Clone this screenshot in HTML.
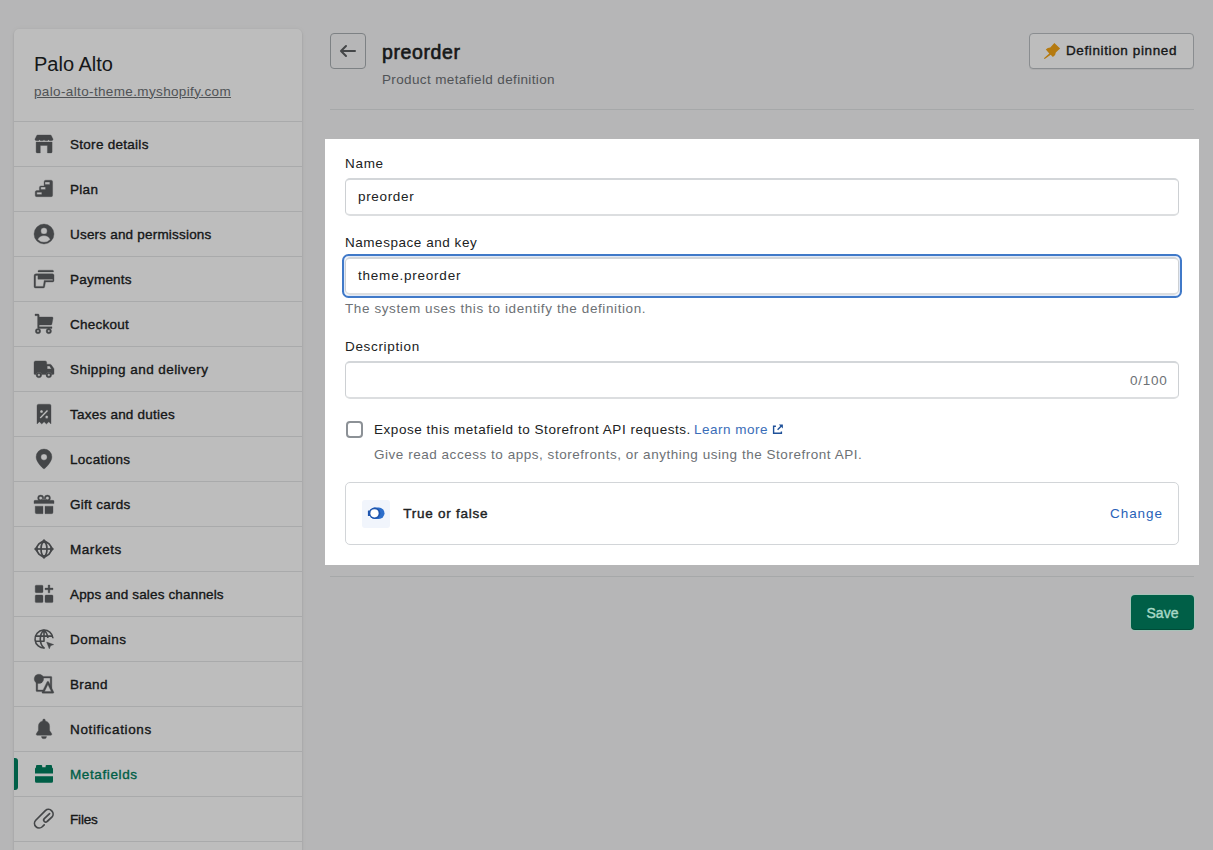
<!DOCTYPE html>
<html>
<head>
<meta charset="utf-8">
<title>preorder</title>
<style>
*{box-sizing:border-box;margin:0;padding:0}
html,body{width:1213px;height:850px;overflow:hidden}
body{background:#f6f6f7;font-family:"Liberation Sans",sans-serif;color:#202223;position:relative;font-size:14px}
.abs{position:absolute}
/* sidebar */
#side{position:absolute;left:14px;top:29px;width:288px;height:840px;background:#fff;border-radius:5px;box-shadow:0 0 5px rgba(23,24,24,.05),0 1px 2px rgba(0,0,0,.15)}
#side h1{position:absolute;left:20px;top:23px;font-size:20px;font-weight:400;line-height:24px;color:#202223;white-space:nowrap}
#side .url{position:absolute;left:20px;top:53.500px;font-size:13.500px;line-height:18px;letter-spacing:.36px;color:#6d7175;text-decoration:underline;white-space:nowrap}
.nav{position:absolute;left:0;top:92px;width:288px}
.nav .it{position:relative;height:45px;border-top:1px solid #e5e6e7}
.nav .it svg{position:absolute;left:20px;top:12px;width:20px;height:20px;fill:#5c5f62;stroke:#5c5f62;stroke-width:.35;stroke-linejoin:round;overflow:visible}
.nav .it span{position:absolute;left:56px;top:13.600px;font-size:13.500px;line-height:18px;font-weight:400;-webkit-text-stroke:.35px #202223;color:#202223;white-space:nowrap}
.nav .it.sel span{color:#007f5f;-webkit-text-stroke-color:#007f5f}
.nav .it.sel svg{fill:#007f5f;stroke:#007f5f}
.nav .it.sel:before{content:"";position:absolute;left:0;top:6px;width:3.5px;height:32px;background:#008060;border-radius:0 3px 3px 0}
/* header */
#back{position:absolute;left:330px;top:33px;width:36px;height:36px;border:1px solid #a9aeb2;border-radius:4px}
#back svg{position:absolute;left:7px;top:7px;width:20px;height:20px;fill:#5c5f62}
#title{position:absolute;left:382px;top:40px;font-size:19.500px;line-height:24px;font-weight:400;-webkit-text-stroke:.6px #202223;letter-spacing:.62px;color:#202223;white-space:nowrap}
#sub{position:absolute;left:382px;top:70.500px;font-size:13.500px;line-height:18px;letter-spacing:.36px;color:#6d7175;white-space:nowrap}
#pin{position:absolute;left:1029px;top:33px;width:165px;height:36px;border:1px solid #babfc3;border-radius:4px;background:#fff;box-shadow:0 1px 0 rgba(0,0,0,.05)}
#pin svg{position:absolute;left:12px;top:7px;width:20px;height:20px;fill:#f4a516}
#pin span{position:absolute;left:36px;top:8px;font-size:13.500px;line-height:18px;letter-spacing:.62px;font-weight:400;-webkit-text-stroke:.35px #202223;color:#202223;white-space:nowrap}
.hr{position:absolute;left:330px;width:864px;height:1px;background:#e1e3e5}
#save{position:absolute;left:1131px;top:595px;width:63px;height:35px;border-radius:4px;background:#005f47;box-shadow:0 0 0 1px rgba(150,205,185,.5),inset 0 -1px 0 rgba(0,0,0,.2);z-index:20}
#save span{position:absolute;left:0;right:0;top:9px;text-align:center;font-size:14px;line-height:18px;font-weight:400;-webkit-text-stroke:.4px #a8d8c6;color:#a8d8c6}
/* overlay */
#ov{position:absolute;left:0;top:0;width:1213px;height:850px;background:rgba(0,0,0,.26);z-index:10}
/* card */
#card{position:absolute;left:325px;top:139px;width:874px;height:426px;background:#fff;z-index:20}
#card .t{position:absolute;font-size:13.500px;line-height:18px;color:#202223;white-space:nowrap}
#card .g{color:#6d7175}
#card .b{color:#2862b8}
#card .inp{position:absolute;left:20px;width:834px;height:38px;border:1px solid #cdd0d3;border-top:2px solid #d3d6d9;border-bottom:2px solid #dcdee0;border-radius:5px;background:#fff}
#nskey:after{content:"";position:absolute;left:-4px;top:-5px;right:-4px;bottom:-5px;border:2px solid #4079c8;border-radius:6.5px;box-shadow:inset 0 0 0 1px #dfe9f9}
#cb{position:absolute;left:21px;top:282px;width:17px;height:17px;border:2px solid #8c9196;border-radius:4px;background:#fff}
#tf{position:absolute;left:20px;top:343px;width:834px;height:63px;border:1px solid #d2d5d8;border-radius:5px;background:#fff}
#tfi{position:absolute;left:37px;top:361px;width:28px;height:28px;border-radius:3px;background:#f1f5fc}
#tfi svg{position:absolute;left:0;top:0;width:28px;height:28px}
</style>
</head>
<body>
<div id="side">
  <h1>Palo Alto</h1>
  <div class="url">palo-alto-theme.myshopify.com</div>
  <div class="nav">
    <div class="it"><svg viewBox="0 0 20 20"><path d="M3.600 1h12.800a1 1 0 0 1 .900.600l1.700 3.600h-18l1.700-3.600a1 1 0 0 1 .900-.600z"/><path d="M1 5h4.500v.300a2.250 1.500 0 0 1-4.500 0zM5.500 5h4.500v.300a2.250 1.500 0 0 1-4.500 0zM10 5h4.500v.300a2.250 1.500 0 0 1-4.500 0zM14.500 5h4.500v.300a2.250 1.500 0 0 1-4.500 0z"/><path d="M2.100 8.100h16v9.800a1 1 0 0 1-1 1h-3.700v-7.500h-7.100v7.500h-3.200a1 1 0 0 1-1-1z"/></svg><span style="letter-spacing:0.28px">Store details</span></div>
    <div class="it"><svg viewBox="0 0 20 20"><path fill-rule="evenodd" d="M11.600 1.200h5.500a1.500 1.500 0 0 1 1.500 1.500v13.500a1.500 1.500 0 0 1-1.500 1.500h-14.400a1.500 1.500 0 0 1-1.500-1.500v-3.100a1.500 1.500 0 0 1 1.500-1.500h2.700v-3.200a1.500 1.500 0 0 1 1.500-1.500h3.200v-4.200a1.500 1.500 0 0 1 1.500-1.500zM11 3.100v2.300h4.800v-2.300zM6.800 8.100v2.500h4.700v-2.500zM2.800 13.200v2.400h5v-2.400z"/></svg><span style="letter-spacing:0.31px">Plan</span></div>
    <div class="it"><svg viewBox="0 0 20 20"><path fill-rule="evenodd" d="M10 0a10 10 0 1 0 0 20a10 10 0 0 0 0-20zm0 3.700a3.200 3.200 0 1 1 0 6.400a3.200 3.200 0 0 1 0-6.400zM3.700 15.400c1.100-2.400 3.500-3.800 6.300-3.800s5.200 1.400 6.300 3.800a8.300 8.300 0 0 1-12.600 0z"/></svg><span style="letter-spacing:0.20px">Users and permissions</span></div>
    <div class="it"><svg viewBox="0 0 20 20"><path d="M5 1.200h13.500a1 1 0 0 1 1 1v.700h-15.500v-.700a1 1 0 0 1 1-1z"/><path fill-rule="evenodd" d="M2 4.800h16.500a1.500 1.500 0 0 1 1.500 1.500v5.200a1.500 1.500 0 0 1-1.500 1.500h-7l-.800 4.700a1.500 1.500 0 0 1-1.500 1.300h-7.700a1.500 1.500 0 0 1-1.500-1.500v-10.700a2 2 0 0 1 2-2zm-.400 2v10.600h7.600l1-6h8.600v-1.200h-14.900v-3.800h-1.500a.400.400 0 0 0-.400.400z"/></svg><span style="letter-spacing:0.22px">Payments</span></div>
    <div class="it"><svg viewBox="0 0 20 20"><path fill-rule="evenodd" d="M1 0h3a1.200 1.200 0 0 1 1.200 1.200v1.800h12.800a1 1 0 0 1 1 1.200l-1.100 6a1 1 0 0 1-1 .800h-11.700v1.800h12.800v1.600h-13.400a1 1 0 0 1-1-1v-11.700h-2.600zM4 14.400a2.700 2.700 0 1 1 0 5.400a2.700 2.700 0 0 1 0-5.400zm0 1.600a1.100 1.100 0 1 0 0 2.200a1.100 1.100 0 0 0 0-2.200zM14.800 14.400a2.700 2.700 0 1 1 0 5.400a2.700 2.700 0 0 1 0-5.400zm0 1.600a1.100 1.100 0 1 0 0 2.200a1.100 1.100 0 0 0 0-2.200z"/></svg><span style="letter-spacing:0.25px">Checkout</span></div>
    <div class="it"><svg viewBox="0 0 20 20"><path fill-rule="evenodd" d="M1.500 1.900h9.700a1.500 1.500 0 0 1 1.500 1.500v1.800h3.300a1.500 1.500 0 0 1 1.200.600l2.500 3.500a1.500 1.500 0 0 1 .300.900v4.400a1 1 0 0 1-1 1h-1.400a2.900 2.900 0 0 0-5.600 0h-4.300a2.900 2.900 0 0 0-5.600 0h-1.100a1 1 0 0 1-1-1v-11.200a1.500 1.500 0 0 1 1.500-1.500zm11.700 5.200v2.800h4.200l-1.800-2.800zM4.900 13.200a2.800 2.800 0 1 1 0 5.600a2.800 2.800 0 0 1 0-5.600zm0 1.600a1.200 1.200 0 1 0 0 2.400a1.200 1.200 0 0 0 0-2.400zM14.800 13.200a2.800 2.800 0 1 1 0 5.600a2.800 2.800 0 0 1 0-5.600zm0 1.600a1.200 1.200 0 1 0 0 2.400a1.200 1.200 0 0 0 0-2.400z"/></svg><span style="letter-spacing:0.44px">Shipping and delivery</span></div>
    <div class="it"><svg viewBox="0 0 20 20"><path fill-rule="evenodd" d="M3 1.700a1.500 1.500 0 0 1 1.500-1.500h11a1.500 1.500 0 0 1 1.500 1.500v18.300l-2.200-2.200l-2.350 2.200l-2.350-2.200l-2.350 2.200l-2.350-2.200l-2.400 2.200zm3 5.800a1.500 1.500 0 1 0 3 0a1.500 1.500 0 0 0-3 0zm5.200 5.400a1.500 1.500 0 1 0 3 0a1.500 1.500 0 0 0-3 0zm-5.600.500l7.400-7.600l1.200 1.200l-7.400 7.600z"/></svg><span style="letter-spacing:0.23px">Taxes and duties</span></div>
    <div class="it"><svg viewBox="0 0 20 20"><path fill-rule="evenodd" d="M10 0a7.900 7.900 0 0 0-7.900 7.900c0 5 5.900 10.500 7.200 11.600a1 1 0 0 0 1.400 0c1.300-1.100 7.200-6.600 7.200-11.600a7.900 7.900 0 0 0-7.900-7.900zm0 4.900a3.150 3.150 0 1 1 0 6.300a3.150 3.150 0 0 1 0-6.300z"/></svg><span style="letter-spacing:0.29px">Locations</span></div>
    <div class="it"><svg viewBox="0 0 20 20"><path fill-rule="evenodd" d="M6.700 1a3.100 3.100 0 1 1 0 6.200a3.100 3.100 0 0 1 0-6.200zm0 1.400a1.700 1.700 0 1 0 0 3.400a1.700 1.700 0 0 0 0-3.400zM13.400 1a3.100 3.100 0 1 1 0 6.200a3.100 3.100 0 0 1 0-6.200zm0 1.400a1.700 1.700 0 1 0 0 3.400a1.700 1.700 0 0 0 0-3.400zM8.500 4.500h3v2.500h-3z"/><path d="M1 6.300h18a1 1 0 0 1 1 1v2.300h-20v-2.300a1 1 0 0 1 1-1zM1.200 12.200h7.800v7.500h-6.300a1.500 1.500 0 0 1-1.500-1.500zM11 12.200h8v6a1.500 1.500 0 0 1-1.500 1.500h-6.500z"/></svg><span style="letter-spacing:0.29px">Gift cards</span></div>
    <div class="it"><svg viewBox="0 0 20 20"><g fill="none" stroke="#5c5f62" stroke-width="1.700"><circle cx="10" cy="10" r="7.200"/><ellipse cx="10" cy="10" rx="3" ry="7.200"/><path d="M1.500 10h17"/></g><path d="M10 0l3.600 3.400h-7.200zM10 20l3.600-3.400h-7.200zM0 10l3.400-3.600v7.200zM20 10l-3.400-3.600v7.200z" stroke="none"/></svg><span style="letter-spacing:0.55px">Markets</span></div>
    <div class="it"><svg viewBox="0 0 20 20"><rect x="1.200" y="1.200" width="7.800" height="7.500" rx="1"/><rect x="1.200" y="11" width="7.800" height="7.600" rx="1"/><rect x="11" y="11" width="8" height="7.600" rx="1"/><path d="M14.150 1h1.700v3.050h3.150v1.700h-3.150v3.050h-1.700v-3.050h-3.150v-1.700h3.150z"/></svg><span style="letter-spacing:0.16px">Apps and sales channels</span></div>
    <div class="it"><svg viewBox="0 0 20 20"><g fill="none" stroke="#5c5f62" stroke-width="1.600"><path d="M19 9.200a9 9 0 1 0-8.200 9.800"/><path d="M10 1c-5 4.500-5 13.500 0 18M10 1c2.300 2.100 3.600 5 3.900 8M1.300 7.100h17.200M1.300 12.300h9.200M10 1v11.500"/></g><path d="M12.600 13l7.200 2.600-3.200 1.200-1.300 3.100z"/></svg><span style="letter-spacing:0.46px">Domains</span></div>
    <div class="it"><svg viewBox="0 0 20 20"><circle cx="4.900" cy="4.900" r="4.700"/><path fill-rule="evenodd" d="M8 2.400h9a.800.800 0 0 1 .800.800v11h-1.600v-10.200h-7.200zM2.100 9h1.600v7h5.300v1.600h-6.100a.800.800 0 0 1-.800-.800z"/><path fill-rule="evenodd" d="M13.900 7.200a.900.900 0 0 1 .800.500l5 10.200a.900.900 0 0 1-.800 1.300h-10a.900.900 0 0 1-.800-1.300l5-10.200a.900.900 0 0 1 .800-.500zm0 3.400l-3.400 7h6.800z"/></svg><span style="letter-spacing:0.34px">Brand</span></div>
    <div class="it"><svg viewBox="0 0 20 20"><path d="M10 0a1.300 1.300 0 0 1 1.300 1.300v.600a5.600 5.600 0 0 1 4.300 5.500v4l2 3.200a1.100 1.100 0 0 1-.900 1.700h-13.400a1.100 1.100 0 0 1-.900-1.700l2-3.200v-4a5.600 5.600 0 0 1 4.300-5.500v-.600a1.300 1.300 0 0 1 1.300-1.300zM7.400 17.600h5.200a2.600 2.200 0 0 1-5.200 0z"/></svg><span style="letter-spacing:0.64px">Notifications</span></div>
    <div class="it sel"><svg viewBox="0 0 20 20"><path d="M3 1h4.200a1 1 0 0 1 1 1v1.200h3.400v-1.200a1 1 0 0 1 1-1h4.400a1 1 0 0 1 1 1v1.500a1.500 1.500 0 0 1 1 1.400v4.700h-18v-4.700a1.500 1.500 0 0 1 1-1.400v-1.500a1 1 0 0 1 1-1zM1 12.200h18v5.100a1.500 1.500 0 0 1-1.500 1.500h-15a1.500 1.500 0 0 1-1.500-1.500z" stroke="none"/></svg><span style="letter-spacing:0.61px">Metafields</span></div>
    <div class="it"><svg viewBox="0 0 20 20"><path fill="none" stroke="#5c5f62" stroke-width="1.700" stroke-linecap="round" d="M15.600 4.600L10.300 9.700A1.980 1.980 0 0 0 13.100 12.500L17.850 8.150A4.600 4.600 0 0 0 11.350 1.650L1.750 11.250A4.600 4.600 0 0 0 8.250 17.750L10.200 15.800"/></svg><span style="letter-spacing:-0.16px">Files</span></div>
    <div class="it"></div>
  </div>
</div>

<div id="back"><svg viewBox="0 0 20 20"><path d="M17 9H5.414l3.293-3.293a.999.999 0 1 0-1.414-1.414l-5 5a.999.999 0 0 0 0 1.414l5 5a.997.997 0 0 0 1.414 0 .999.999 0 0 0 0-1.414L5.414 11H17a1 1 0 1 0 0-2z"/></svg></div>
<div id="title">preorder</div>
<div id="sub">Product metafield definition</div>
<div id="pin"><svg viewBox="0 0 20 20"><path d="M12.350 1.900L18.100 7.400L13.800 11.600L13.100 14.100L10.900 16.100L8.700 13.800L2.700 18.100L1.900 17.300L7.300 12.400L3.800 8.400L5.800 6.900L8.300 6.500Z"/></svg><span>Definition pinned</span></div>
<div class="hr" style="top:109px"></div>
<div class="hr" style="top:576px"></div>
<div id="save"><span>Save</span></div>

<div id="ov"></div>

<div id="card">
  <div class="inp" style="top:38.500px"></div>
  <div class="inp" id="nskey" style="top:118px"></div>
  <div class="inp" style="top:221.500px"></div>
  <div id="cb"></div>
  <div id="tf"></div>
  <div id="tfi"><svg viewBox="0 0 28 28"><path d="M6.400 10.600h2.100v5.400h-2.100a.500.500 0 0 1-.500-.500v-4.400a.500.500 0 0 1 .500-.500z" fill="#1f55ad"/><rect x="7.200" y="7.600" width="15.300" height="11.300" rx="5.650" fill="#2c6ecb"/><circle cx="12.700" cy="13.250" r="5.650" fill="#1f55ad"/><circle cx="12.500" cy="13.300" r="4.100" fill="#fff"/></svg></div>
  <svg style="position:absolute;left:447px;top:285px;width:12px;height:11px" viewBox="0 0 12 11"><path d="M3.900 2.300H1.600V9.300H9.400V7.500M5.600 5.700L9.800 1.500" fill="none" stroke="#1f5199" stroke-width="1.400"/><path d="M6.800.400h4.100v4.100z" fill="#1f5199"/></svg>
  <div class="t " style="left:20.0px;top:15.6px;letter-spacing:0.70px;">Name</div>
  <div class="t " style="left:33.0px;top:49.1px;letter-spacing:0.66px;">preorder</div>
  <div class="t " style="left:20.0px;top:95.1px;letter-spacing:0.54px;">Namespace and key</div>
  <div class="t " style="left:33.0px;top:127.6px;letter-spacing:0.78px;">theme.preorder</div>
  <div class="t g" style="left:20.0px;top:161.1px;letter-spacing:0.60px;">The system uses this to identify the definition.</div>
  <div class="t " style="left:20.0px;top:199.1px;letter-spacing:0.67px;">Description</div>
  <div class="t g" style="left:805.0px;top:232.6px;letter-spacing:0.74px;">0/100</div>
  <div class="t " style="left:49.0px;top:282.1px;letter-spacing:0.54px;">Expose this metafield to Storefront API requests.</div>
  <div class="t b" style="color:#3a6db8;left:369.0px;top:282.1px;letter-spacing:0.50px;">Learn more</div>
  <div class="t g" style="left:49.0px;top:306.6px;letter-spacing:0.53px;">Give read access to apps, storefronts, or anything using the Storefront API.</div>
  <div class="t " style="left:78.3px;top:365.6px;letter-spacing:0.74px;-webkit-text-stroke:.4px #202223;">True or false</div>
  <div class="t b" style="left:785.0px;top:366.1px;letter-spacing:0.94px;">Change</div>
</div>
</body>
</html>
